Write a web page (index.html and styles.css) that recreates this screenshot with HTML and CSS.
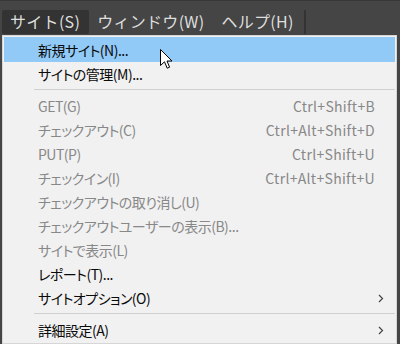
FILE: index.html
```html
<!DOCTYPE html>
<html lang="ja">
<head>
    <meta charset="UTF-8">
    <meta name="viewport" content="width=device-width, initial-scale=1.0">
    <title>サイト メニュー</title>
    <link rel="stylesheet" href="styles.css">
</head>
<body>
    <div class="menubar">
        <span class="bar-item open">サイト(S)</span>
        <span class="bar-item">ウィンドウ(W)</span>
        <span class="bar-item">ヘルプ(H)</span>
        <span class="bar-sep"></span>
    </div>

    <div class="dropdown">
        <div class="row hover"><span class="label">新規サイト(N)...</span></div>
        <div class="row"><span class="label">サイトの管理(M)...</span></div>
        <div class="sep"></div>
        <div class="row off"><span class="label">GET(G)</span><span class="key">Ctrl+Shift+B</span></div>
        <div class="row off"><span class="label">チェックアウト(C)</span><span class="key">Ctrl+Alt+Shift+D</span></div>
        <div class="row off"><span class="label">PUT(P)</span><span class="key">Ctrl+Shift+U</span></div>
        <div class="row off"><span class="label">チェックイン(I)</span><span class="key">Ctrl+Alt+Shift+U</span></div>
        <div class="row off"><span class="label">チェックアウトの取り消し(U)</span></div>
        <div class="row off"><span class="label">チェックアウトユーザーの表示(B)...</span></div>
        <div class="row off"><span class="label">サイトで表示(L)</span></div>
        <div class="row"><span class="label">レポート(T)...</span></div>
        <div class="row"><span class="label">サイトオプション(O)</span>
            <svg class="arrow" width="6" height="9" viewBox="0 0 6 9"><path d="M1 1 L4.5 4.5 L1 8" fill="none" stroke="#444" stroke-width="1.2"/></svg>
        </div>
        <div class="sep"></div>
        <div class="row"><span class="label">詳細設定(A)</span>
            <svg class="arrow" width="6" height="9" viewBox="0 0 6 9"><path d="M1 1 L4.5 4.5 L1 8" fill="none" stroke="#444" stroke-width="1.2"/></svg>
        </div>

        <!-- mouse pointer over the first item -->
        <svg class="pointer" width="13" height="21" viewBox="0 0 13 21">
            <path d="M0.5 0.5 L0.5 16.5 L4.5 12.8 L7.2 19.2 L9.6 18.2 L7 12 L12 12 Z" fill="#fff" stroke="#000" stroke-width="1" stroke-linejoin="miter"/>
        </svg>
    </div>
</body>
</html>
```

FILE: styles.css
```css
body{
    margin: 0;
    width: 400px;
    height: 344px;
    background-color: rgb(69, 69, 69);
    font-family: "Noto Sans CJK JP", sans-serif;
    overflow: hidden;
}

.menubar{
    height: 24px;
    padding: 9px 0 1px 2px;
    border-top: 1px solid rgb(56, 56, 56);
    display: flex;
    align-items: stretch;
}

.bar-item{
    color: rgb(222, 222, 222);
    font-size: 16px;
    letter-spacing: 0.3px;
    line-height: 23px;
    padding: 0 8px;
    margin-right: 1px;
    border-radius: 2px;
}

.bar-item.open{
    background-color: rgb(51, 51, 51);
    padding-right: 9px;
    margin-right: 0;
}

.bar-sep{
    width: 2px;
    margin-left: 1px;
    background-color: rgb(52, 52, 52);
}

.dropdown{
    position: relative;
    margin-left: 2px;
    width: 391px;
    padding: 1px;
    border: 1px solid rgb(214, 214, 214);
    background-color: rgb(241, 241, 241);
}

.row{
    height: 24px;
    padding: 0 20px 0 34px;
    display: flex;
    align-items: center;
    font-size: 14px;
    font-feature-settings: "palt";
    color: rgb(10, 10, 10);
}

.row.hover{
    height: 25px;
    background-color: rgb(145, 201, 247);
}

.row.off{
    color: rgb(136, 136, 136);
}

.label{
    flex: 1;
    white-space: nowrap;
    letter-spacing: -0.5px;
}

.key{
    white-space: nowrap;
    letter-spacing: 0.3px;
}

.arrow{
    margin-right: -9px;
}

.sep{
    height: 1px;
    margin: 3px 0 4px 30px;
    background-color: rgb(208, 208, 208);
}

.pointer{
    position: absolute;
    left: 157px;
    top: 13px;
}
```
